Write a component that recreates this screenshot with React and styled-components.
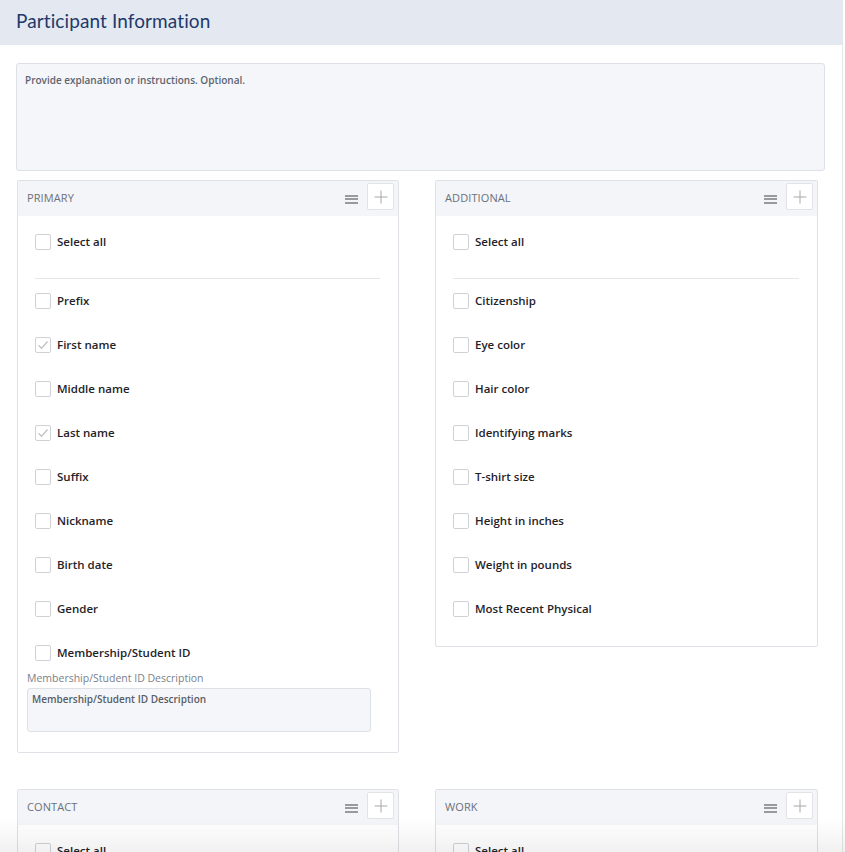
import React from "react";
import styled, { createGlobalStyle } from "styled-components";

const Global = createGlobalStyle`
  html, body { margin: 0; padding: 0; background: #ffffff; }
  body { font-family: "Open Sans", "Liberation Sans", Arial, sans-serif; }
  * { box-sizing: border-box; }
`;

const Page = styled.div`
  width: 843px;
  min-height: 852px;
  border-right: 1px solid #e6e7ea;
  background: #fff;
`;

const TopBar = styled.header`
  height: 45px;
  background: #e4e9f1;
  display: flex;
  align-items: center;
  padding: 0 16px 5px 16px;
`;

const Title = styled.h1`
  margin: 0;
  font-family: Lato, "Open Sans", sans-serif;
  font-size: 19px;
  font-weight: 400;
  color: #22386a;
  letter-spacing: 0.1px;
`;

const Content = styled.div`
  padding: 18px 17px 40px 16px;
`;

const Instructions = styled.div`
  height: 108px;
  background: #f5f6f9;
  border: 1px solid #dde0e6;
  border-radius: 3px;
  padding: 9px 8px;
  font-size: 10px;
  font-weight: 600;
  color: #5d6470;
`;

const Grid = styled.div`
  display: grid;
  grid-template-columns: 382px 383px;
  column-gap: 36px;
  row-gap: 36px;
  margin: 9px 0 0 1px;
  align-items: start;
`;

const Panel = styled.section`
  border: 1px solid #dfe1e6;
  border-radius: 2px;
  background: #fff;
  padding-bottom: ${(p) => p.$pb || 13}px;
`;

const PanelHead = styled.div`
  height: 35px;
  background: #f4f5f8;
  display: flex;
  align-items: center;
  padding: 0 4px 2px 9px;
`;

const PanelTitle = styled.span`
  flex: 1;
  font-size: 11px;
  color: #6b7079;
  letter-spacing: 0.1px;
`;

const Burger = styled.span`
  width: 13px;
  height: 9px;
  display: flex;
  flex-direction: column;
  justify-content: space-between;
  margin-right: 9px;
  margin-top: 3px;
  span {
    display: block;
    height: 2px;
    background: #9a9a9a;
  }
`;

const AddBtn = styled.button`
  align-self: flex-start;
  margin-top: 2px;
  width: 27px;
  height: 27px;
  border: 1px solid #e2e3e6;
  border-radius: 2px;
  background: #fff;
  padding: 0;
  display: flex;
  align-items: center;
  justify-content: center;
`;

const Body = styled.div`
  padding: 4px 18px 0 17px;
`;

const Row = styled.label`
  height: 44px;
  display: flex;
  align-items: center;
  gap: 6px;
  font-size: 11.5px;
  font-weight: 600;
  color: #1f2329;
`;

const RowText = styled.span`
  padding-bottom: 1px;
`;

const Box = styled.span`
  width: 16px;
  height: 16px;
  border: 1px solid #cfd1d5;
  border-radius: 2px;
  background: #fff;
  display: flex;
  align-items: center;
  justify-content: center;
  flex: none;
`;

const Divider = styled.hr`
  border: 0;
  border-top: 1px solid #e6e7ea;
  margin: 14px 0 0 0;
`;

const DescBlock = styled.div`
  margin: -4px 10px 0 -8px;
`;

const DescLabel = styled.div`
  font-size: 10.5px;
  line-height: 14px;
  color: #7a7f88;
`;

const DescInput = styled.div`
  margin-top: 3px;
  height: 44px;
  width: 344px;
  background: #f5f6f9;
  border: 1px solid #dde0e6;
  border-radius: 3px;
  padding: 3px 4px;
  font-size: 10px;
  font-weight: 600;
  color: #575c65;
`;

const Fade = styled.div`
  position: fixed;
  left: 0;
  right: 0;
  bottom: 0;
  height: 34px;
  pointer-events: none;
  background: linear-gradient(rgba(0, 0, 0, 0), rgba(0, 0, 0, 0.055));
`;

const Check = () => (
  <svg width="12" height="10" viewBox="0 0 12 10">
    <path d="M1.5 5.2 L4.6 8.2 L10.5 1.5" fill="none" stroke="#c2c4c8" strokeWidth="1.4" />
  </svg>
);

const Plus = () => (
  <svg width="14" height="14" viewBox="0 0 14 14">
    <path d="M7 0.5 V13.5 M0.5 7 H13.5" stroke="#a8a8a8" strokeWidth="1" />
  </svg>
);

const Item = ({ label, checked }) => (
  <Row>
    <Box>{checked && <Check />}</Box>
    <RowText>{label}</RowText>
  </Row>
);

const Section = ({ title, items, pb, children }) => (
  <Panel $pb={pb}>
    <PanelHead>
      <PanelTitle>{title}</PanelTitle>
      <Burger>
        <span />
        <span />
        <span />
      </Burger>
      <AddBtn aria-label="add">
        <Plus />
      </AddBtn>
    </PanelHead>
    <Body>
      <Item label="Select all" />
      <Divider />
      {items.map((it) => (
        <Item key={it.label} label={it.label} checked={it.checked} />
      ))}
      {children}
    </Body>
  </Panel>
);

const primary = [
  { label: "Prefix" },
  { label: "First name", checked: true },
  { label: "Middle name" },
  { label: "Last name", checked: true },
  { label: "Suffix" },
  { label: "Nickname" },
  { label: "Birth date" },
  { label: "Gender" },
  { label: "Membership/Student ID" },
];

const additional = [
  { label: "Citizenship" },
  { label: "Eye color" },
  { label: "Hair color" },
  { label: "Identifying marks" },
  { label: "T-shirt size" },
  { label: "Height in inches" },
  { label: "Weight in pounds" },
  { label: "Most Recent Physical" },
];

const contact = [{ label: "Email" }, { label: "Phone" }];
const work = [{ label: "Employer" }, { label: "Job title" }];

export default function App() {
  return (
    <>
      <Global />
      <Page>
        <TopBar>
          <Title>Participant Information</Title>
        </TopBar>
        <Content>
          <Instructions>Provide explanation or instructions. Optional.</Instructions>
          <Grid>
            <Section title="PRIMARY" items={primary} pb={20}>
              <DescBlock>
                <DescLabel>Membership/Student ID Description</DescLabel>
                <DescInput>Membership/Student ID Description</DescInput>
              </DescBlock>
            </Section>
            <Section title="ADDITIONAL" items={additional} pb={15} />
            <Section title="CONTACT" items={contact} />
            <Section title="WORK" items={work} />
          </Grid>
        </Content>
      </Page>
      <Fade />
    </>
  );
}
